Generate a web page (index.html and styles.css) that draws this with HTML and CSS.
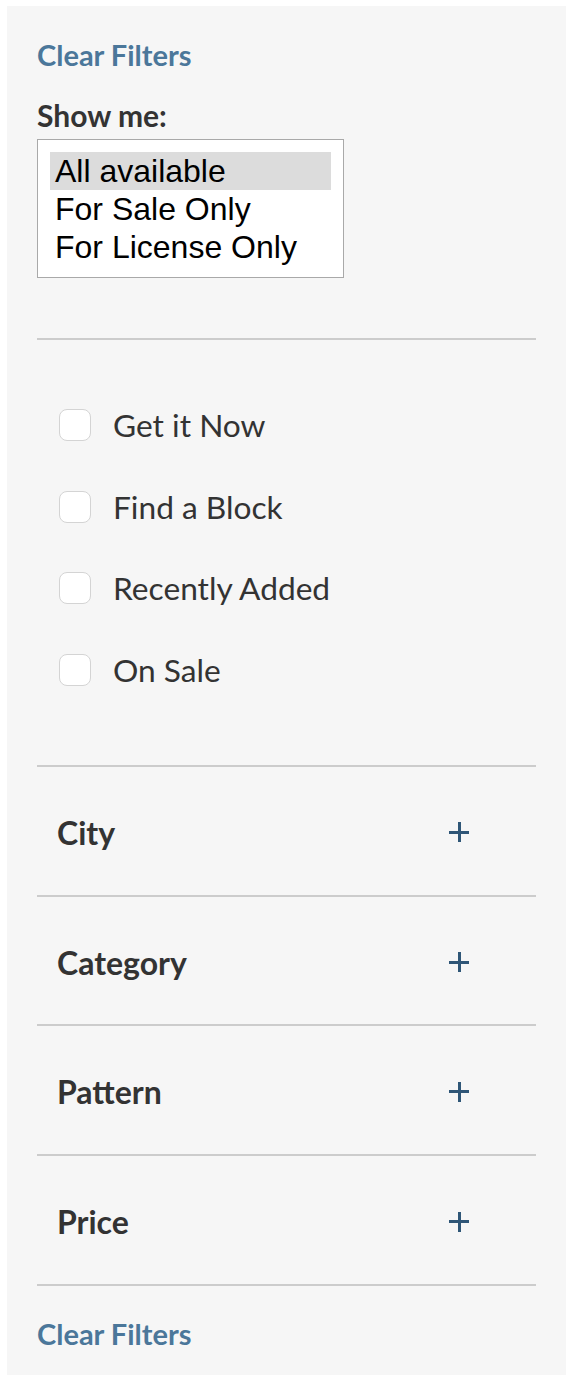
FILE: index.html
```html
<!DOCTYPE html>
<html lang="en">
<head>
<meta charset="utf-8">
<title>Filters</title>
<link rel="stylesheet" href="styles.css">
</head>
<body>
<aside class="panel">
  <a class="clear" href="#">Clear Filters</a>
  <div class="show">
    <label class="show-label">Show me:</label>
    <div class="listbox" role="listbox">
      <div class="opt selected" role="option">All available</div>
      <div class="opt" role="option">For Sale Only</div>
      <div class="opt" role="option">For License Only</div>
    </div>
  </div>
  <div class="checks">
    <label class="check"><span class="box"></span><span class="check-text">Get it Now</span></label>
    <label class="check"><span class="box"></span><span class="check-text">Find a Block</span></label>
    <label class="check"><span class="box"></span><span class="check-text">Recently Added</span></label>
    <label class="check"><span class="box"></span><span class="check-text">On Sale</span></label>
  </div>
  <div class="acc">
    <div class="acc-row"><span class="acc-title">City</span><span class="plus"></span></div>
    <div class="acc-row"><span class="acc-title">Category</span><span class="plus"></span></div>
    <div class="acc-row"><span class="acc-title">Pattern</span><span class="plus"></span></div>
    <div class="acc-row"><span class="acc-title">Price</span><span class="plus"></span></div>
  </div>
  <a class="clear clear-bottom" href="#">Clear Filters</a>
</aside>
</body>
</html>
```
FILE: styles.css
```css
html, body {
  margin: 0;
  padding: 0;
  background: #ffffff;
}
body {
  font-family: Lato, "Open Sans", sans-serif;
  color: #333333;
}
.panel {
  margin: 6px 10px 0 7px;
  background: #f6f6f6;
  padding: 29px 30px 20px 30px;
  display: flex;
  flex-direction: column;
  min-height: 1369px;
  box-sizing: border-box;
}
.clear {
  display: block;
  color: #4b779a;
  font-weight: 700;
  font-size: 29px;
  line-height: 40px;
  text-decoration: none;
}
.show {
  display: flex;
  flex-direction: column;
  margin-top: 23px;
  padding-bottom: 60px;
  border-bottom: 2px solid #cccccc;
}
.show-label {
  font-weight: 700;
  font-size: 30px;
  line-height: 34px;
  margin-bottom: 7px;
}
.listbox {
  width: 307px;
  box-sizing: border-box;
  background: #ffffff;
  border: 1px solid #a9a9a9;
  padding: 12px 12px 11px 12px;
  font-family: "Liberation Sans", Arial, sans-serif;
  font-size: 32px;
  color: #000000;
}
.opt {
  height: 38px;
  line-height: 38px;
  padding: 0 5px;
  white-space: nowrap;
}
.opt.selected {
  background: #dcdcdc;
}
.checks {
  display: flex;
  flex-direction: column;
  gap: 49.67px;
  padding: 69px 0 79px 22px;
  border-bottom: 2px solid #cccccc;
}
.check {
  display: flex;
  align-items: center;
  gap: 22px;
  height: 32px;
}
.box {
  width: 32px;
  height: 32px;
  box-sizing: border-box;
  border: 1px solid #d4d4d4;
  border-radius: 8px;
  background: #ffffff;
  flex: none;
}
.check-text {
  font-size: 31.7px;
  line-height: 32px;
}
.acc-row {
  display: flex;
  align-items: center;
  justify-content: space-between;
  height: 129.75px;
  box-sizing: border-box;
  padding: 3px 67px 0 20px;
  border-bottom: 2px solid #cccccc;
}
.acc-title {
  font-weight: 700;
  font-size: 32px;
}
.plus {
  position: relative;
  width: 20px;
  height: 20px;
}
.plus::before, .plus::after {
  content: "";
  position: absolute;
  background: #2f5677;
}
.plus::before {
  left: 0;
  right: 0;
  top: 8.5px;
  height: 3px;
}
.plus::after {
  top: 0;
  bottom: 0;
  left: 8.5px;
  width: 3px;
}
.clear-bottom {
  margin-top: 28px;
}
```
